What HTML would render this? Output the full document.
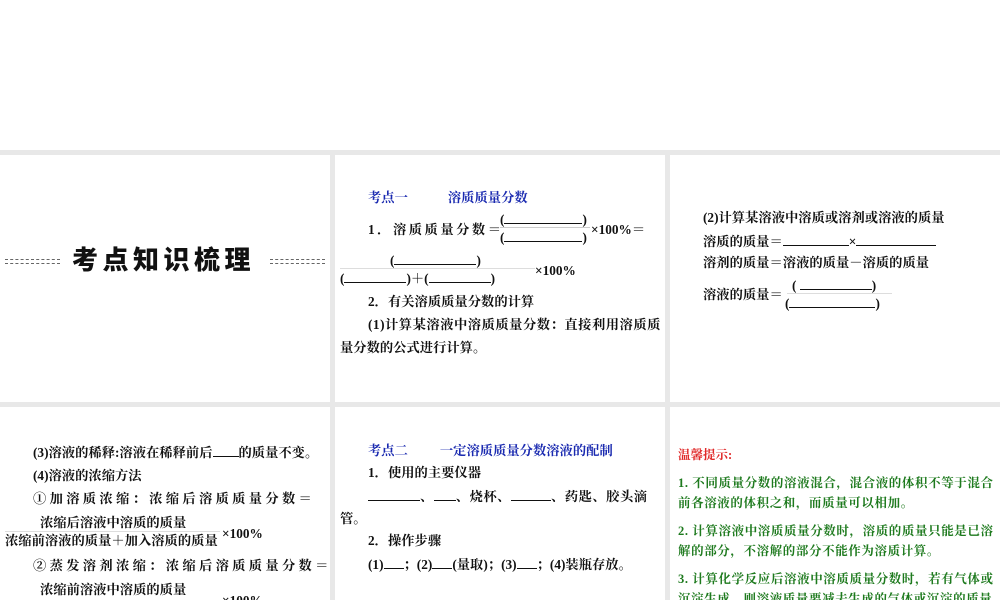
<!DOCTYPE html>
<html><head><meta charset="utf-8"><style>
body{margin:0;width:1000px;height:600px;overflow:hidden;background:#fff;position:relative;font-family:"Liberation Serif","Noto Serif CJK SC",serif;font-weight:bold;color:#111;font-size:13.3px}
.bg{position:absolute;left:0;top:150px;width:1000px;height:450px;background:#e8e8e8}
.p{position:absolute;background:#fff;overflow:hidden}
.t{position:absolute;white-space:nowrap;line-height:16px}
.b{color:#1a2ab0}
.u{display:inline-block;border-bottom:1px solid #111;height:12px;vertical-align:baseline}
.g{color:#1e7a1e;font-size:12.5px;letter-spacing:0.6px}
.dot{position:absolute;border-top:1px dashed #666;height:3px;border-bottom:1px dashed #666}
</style></head><body>
<div class="bg"></div>
<div class="p" style="left:0;top:155px;width:330px;height:247px">
 <div class="dot" style="left:5px;top:104px;width:55px"></div>
 <div class="dot" style="left:270px;top:104px;width:55px"></div>
 <div class="t" style="left:72px;top:89px;font-size:26px;line-height:30px;letter-spacing:4.5px;font-family:'Noto Sans CJK SC',sans-serif;font-weight:900">考点知识梳理</div>
</div>
<div class="p" style="left:335px;top:155px;width:330px;height:247px">
 <div class="t b" style="left:33px;top:35px">考点一<span style="margin-left:40px">溶质质量分数</span></div>
 <div class="t" style="left:33px;top:67px;letter-spacing:2.5px">1．溶质质量分数＝</div>
 <div class="t" style="left:165px;top:56px">(<span class="u" style="width:78px"></span>)</div>
 <div style="position:absolute;left:165px;top:72px;width:90px;border-top:1px solid #ccc"></div>
 <div class="t" style="left:165px;top:74px">(<span class="u" style="width:78px"></span>)</div>
 <div class="t" style="left:256px;top:67px">×100%＝</div>
 <div class="t" style="left:55px;top:97px">(<span class="u" style="width:82px"></span>)</div>
 <div style="position:absolute;left:5px;top:113px;width:195px;border-top:1px solid #ddd"></div>
 <div class="t" style="left:5px;top:115px">(<span class="u" style="width:62px"></span>)＋(<span class="u" style="width:62px"></span>)</div>
 <div class="t" style="left:200px;top:108px">×100%</div>
 <div class="t" style="left:33px;top:139px">2．有关溶质质量分数的计算</div>
 <div class="t" style="left:33px;top:162px;letter-spacing:0.5px">(1)计算某溶液中溶质质量分数：直接利用溶质质</div>
 <div class="t" style="left:5px;top:185px">量分数的公式进行计算。</div>
</div>
<div class="p" style="left:670px;top:155px;width:330px;height:247px">
 <div class="t" style="left:33px;top:55px">(2)计算某溶液中溶质或溶剂或溶液的质量</div>
 <div class="t" style="left:33px;top:78px">溶质的质量＝<span class="u" style="width:66px"></span>×<span class="u" style="width:80px"></span></div>
 <div class="t" style="left:33px;top:100px">溶剂的质量＝溶液的质量－溶质的质量</div>
 <div class="t" style="left:33px;top:132px">溶液的质量＝</div>
 <div class="t" style="left:122px;top:122px">(&nbsp;<span class="u" style="width:72px"></span>)</div>
 <div style="position:absolute;left:117px;top:138px;width:105px;border-top:1px solid #ddd"></div>
 <div class="t" style="left:115px;top:140px">(<span class="u" style="width:86px"></span>)</div>
</div>
<div class="p" style="left:0;top:407px;width:330px;height:193px">
 <div class="t" style="left:33px;top:37px">(3)溶液的稀释:溶液在稀释前后<span class="u" style="width:26px"></span>的质量不变。</div>
 <div class="t" style="left:33px;top:61px">(4)溶液的浓缩方法</div>
 <div class="t" style="left:33px;top:84px;letter-spacing:3.3px">①加溶质浓缩：浓缩后溶质质量分数＝</div>
 <div class="t" style="left:40px;top:108px">浓缩后溶液中溶质的质量</div>
 <div style="position:absolute;left:5px;top:124px;width:215px;border-top:1px solid #ddd"></div>
 <div class="t" style="left:5px;top:126px">浓缩前溶液的质量＋加入溶质的质量</div>
 <div class="t" style="left:222px;top:119px">×100%</div>
 <div class="t" style="left:33px;top:151px;letter-spacing:3.3px">②蒸发溶剂浓缩：浓缩后溶质质量分数＝</div>
 <div class="t" style="left:40px;top:175px">浓缩前溶液中溶质的质量</div>
 <div class="t" style="left:222px;top:186px">×100%</div>
</div>
<div class="p" style="left:335px;top:407px;width:330px;height:193px">
 <div class="t b" style="left:33px;top:36px">考点二<span style="margin-left:32px">一定溶质质量分数溶液的配制</span></div>
 <div class="t" style="left:33px;top:58px">1．使用的主要仪器</div>
 <div class="t" style="left:33px;top:81px;letter-spacing:0.5px"><span class="u" style="width:52px"></span>、<span class="u" style="width:22px"></span>、烧杯、<span class="u" style="width:40px"></span>、药匙、胶头滴</div>
 <div class="t" style="left:5px;top:104px">管。</div>
 <div class="t" style="left:33px;top:126px">2．操作步骤</div>
 <div class="t" style="left:33px;top:149px">(1)<span class="u" style="width:20px"></span>；(2)<span class="u" style="width:20px"></span>(量取)；(3)<span class="u" style="width:20px"></span>；(4)装瓶存放。</div>
</div>
<div class="p" style="left:670px;top:407px;width:330px;height:193px">
 <div class="t" style="left:8px;top:40px;color:#e02828;font-size:12.5px">温馨提示:</div>
 <div class="t g" style="left:8px;top:68px">1. 不同质量分数的溶液混合，混合液的体积不等于混合</div>
 <div class="t g" style="left:8px;top:88px">前各溶液的体积之和，而质量可以相加。</div>
 <div class="t g" style="left:8px;top:116px">2. 计算溶液中溶质质量分数时，溶质的质量只能是已溶</div>
 <div class="t g" style="left:8px;top:136px">解的部分，不溶解的部分不能作为溶质计算。</div>
 <div class="t g" style="left:8px;top:164px">3. 计算化学反应后溶液中溶质质量分数时，若有气体或</div>
 <div class="t g" style="left:8px;top:184px">沉淀生成，则溶液质量要减去生成的气体或沉淀的质量</div>
</div>
</body></html>
